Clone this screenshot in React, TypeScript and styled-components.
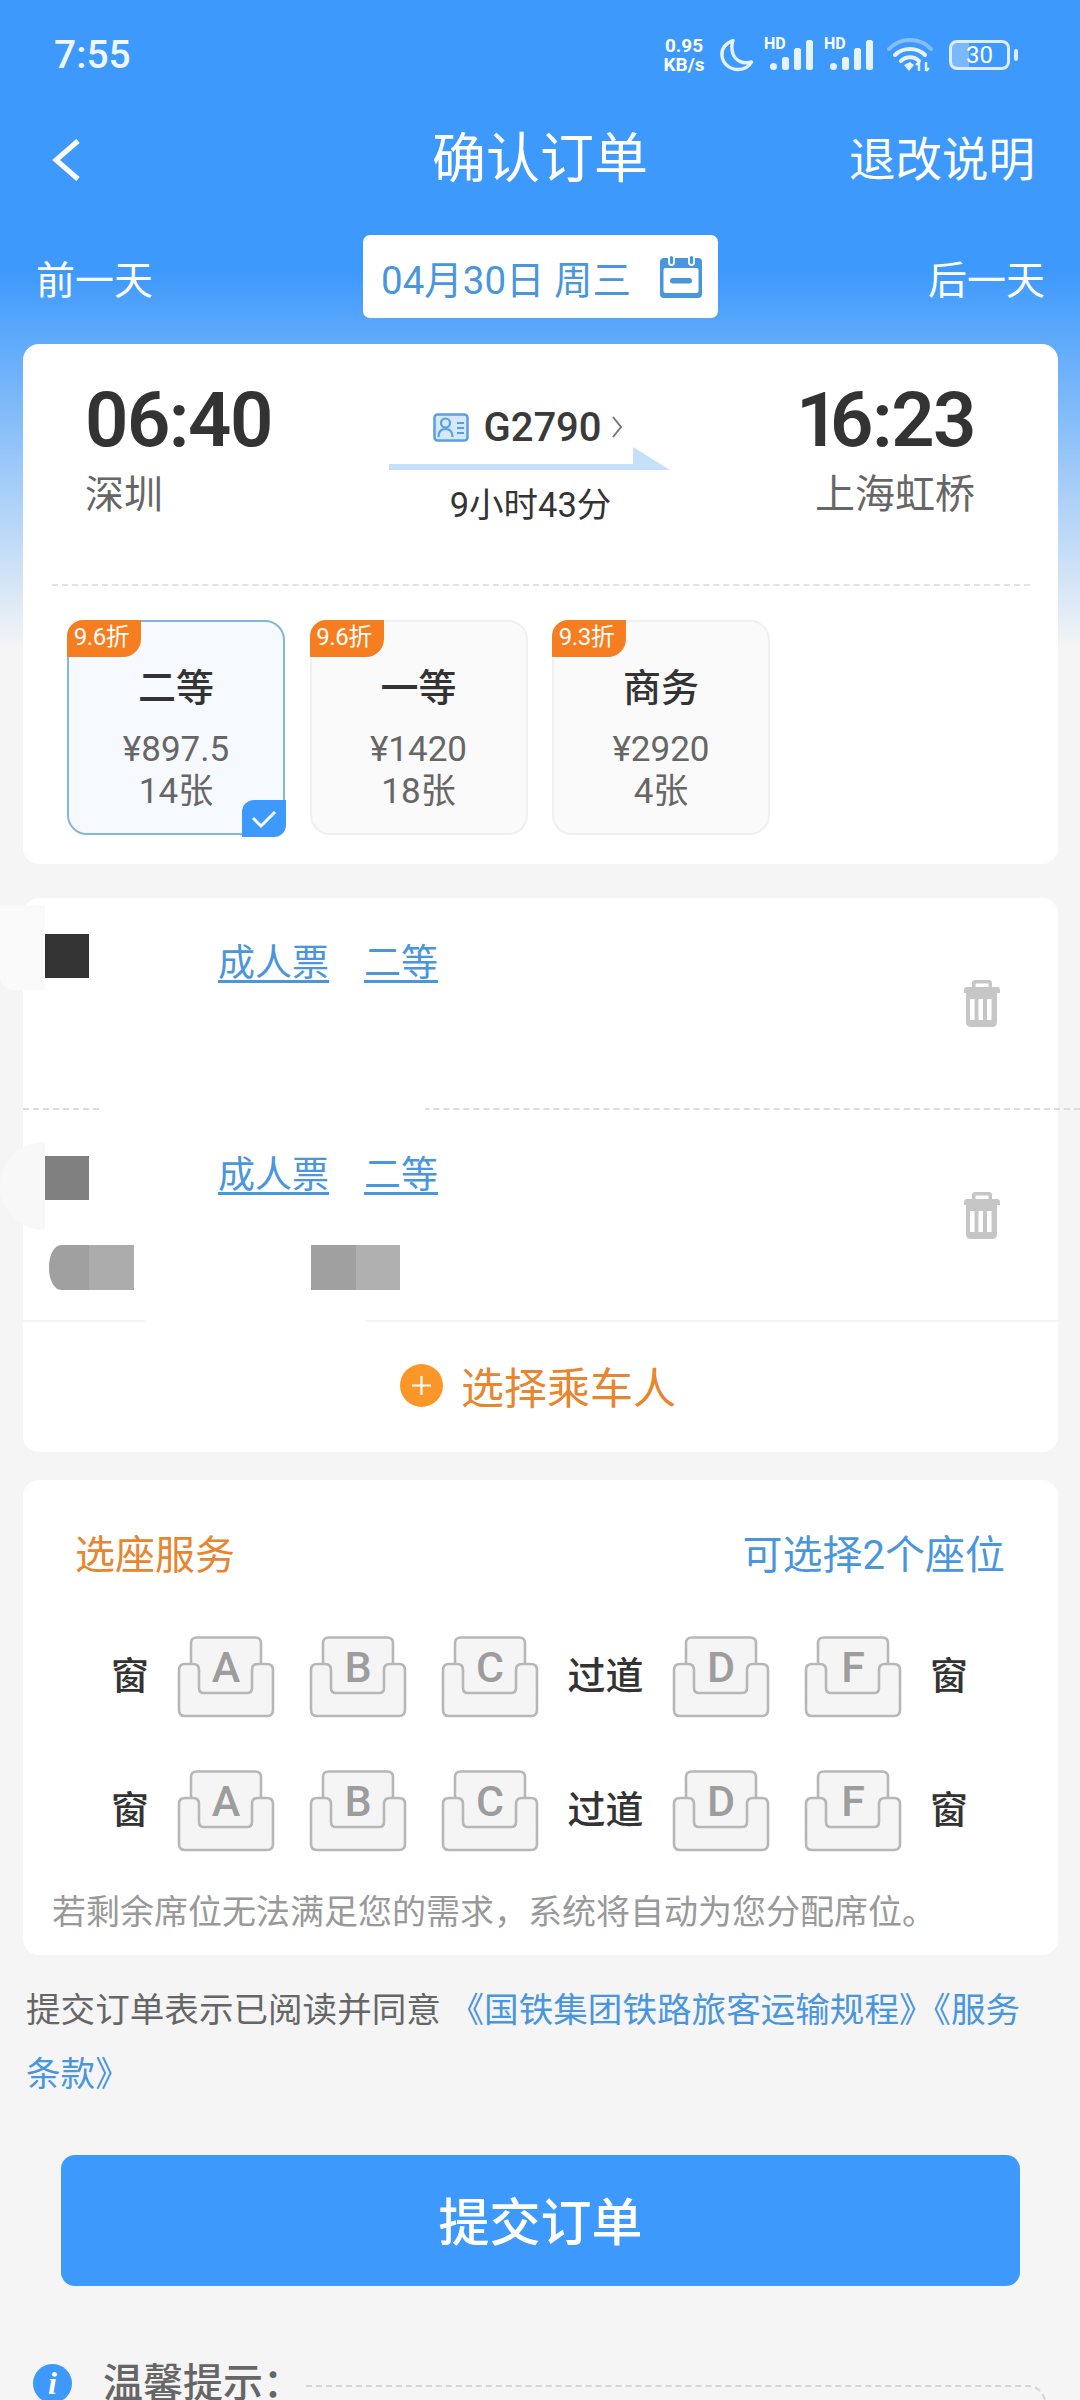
import styled, { createGlobalStyle } from "styled-components";

const GlobalStyle = createGlobalStyle`
  html, body {
    margin: 0;
    padding: 0;
    background: #f5f5f5;
  }
  * {
    box-sizing: border-box;
  }
`;

const BLUE = "#3d99fc";
const LINK = "#4a96dd";
const ORANGE = "#e8852f";

const Page = styled.div`
  width: 1080px;
  height: 2400px;
  overflow: hidden;
  font-family: Roboto, "Noto Sans CJK SC", sans-serif;
  background: linear-gradient(#3d99fc 0, #3d99fc 270px, #f5f5f5 650px);
`;

const StatusBar = styled.div`
  height: 110px;
  padding: 0 70px 0 54px;
  display: flex;
  align-items: center;
  justify-content: space-between;
  color: #fff;
`;

const Clock = styled.span`
  font-size: 39px;
  font-weight: 500;
  color: #eef6ff;
`;

const StatusIcons = styled.div`
  display: flex;
  align-items: center;
`;

const NetSpeed = styled.div`
  width: 48px;
  font-size: 19px;
  line-height: 19px;
  font-weight: 700;
  text-align: center;
  white-space: nowrap;
  margin-right: 11px;
`;

const SignalBox = styled.div`
  position: relative;
  width: 50px;
  height: 32px;
  margin-left: 10px;
`;

const HdLabel = styled.span`
  position: absolute;
  left: 0;
  top: -2px;
  font-size: 16px;
  line-height: 14px;
  font-weight: 700;
`;

const Battery = styled.div`
  position: relative;
  width: 61px;
  height: 30px;
  margin-left: 16px;
  border: 3px solid #dcedff;
  border-radius: 8px;
  display: flex;
  align-items: center;
  justify-content: center;
  font-size: 24px;
  line-height: 24px;
  background: linear-gradient(90deg, #7ab7fd 0, #7ab7fd 30%, transparent 30%);
  &::after {
    content: "";
    position: absolute;
    right: -11px;
    top: 6px;
    width: 4px;
    height: 12px;
    border-radius: 2px;
    background: #dcedff;
  }
`;

const NavBar = styled.div`
  height: 100px;
  padding: 0 45px 0 50px;
  display: flex;
  align-items: center;
  justify-content: space-between;
  position: relative;
  color: #fff;
`;

const NavTitle = styled.div`
  position: absolute;
  left: 0;
  right: 0;
  text-align: center;
  font-size: 54px;
  line-height: 70px;
  pointer-events: none;
`;

const NavAction = styled.span`
  font-size: 46.5px;
  line-height: 60px;
`;

const DateRow = styled.div`
  margin-top: 25px;
  height: 83px;
  padding: 0 35px 0 36px;
  display: flex;
  align-items: center;
  justify-content: space-between;
`;

const DayLink = styled.span`
  font-size: 39px;
  color: #fff;
`;

const DatePicker = styled.div`
  width: 355px;
  height: 83px;
  padding: 0 16px 0 18px;
  border-radius: 7px;
  background: #fff;
  display: flex;
  align-items: center;
  justify-content: space-between;
  color: ${LINK};
  font-size: 38.5px;
`;

const Card = styled.div`
  position: relative;
  margin: 0 22px 0 23px;
  background: #fff;
  border-radius: 16px;
`;

const TrainCard = styled(Card)`
  margin-top: 26px;
  height: 520px;
`;

const Journey = styled.div`
  height: 240px;
  padding: 34px 0 0 62px;
  display: grid;
  grid-template-columns: 304px 283px 1fr;
`;

const Stop = styled.div<{ $right?: boolean }>`
  text-align: ${(p) => (p.$right ? "right" : "left")};
  padding-right: ${(p) => (p.$right ? "83px" : "0")};
`;

const StopTime = styled.div`
  font-size: 76px;
  line-height: 84px;
  font-weight: 600;
  letter-spacing: -1.5px;
  color: #333;
`;

const NarrowOne = styled.span`
  letter-spacing: -9.5px;
`;

const StopName = styled.div<{ $large?: boolean }>`
  margin-top: 8px;
  font-size: ${(p) => (p.$large ? "40px" : "39px")};
  line-height: 50px;
  color: #666;
`;

const TrainInfo = styled.div`
  display: flex;
  flex-direction: column;
  align-items: center;
`;

const TrainNumber = styled.div`
  margin-top: 31px;
  height: 36px;
  padding-right: 5px;
  display: flex;
  align-items: center;
  gap: 15px;
  font-size: 40px;
  font-weight: 500;
  color: #3a3a3a;
`;

const Duration = styled.div`
  margin-top: 13px;
  font-size: 34.5px;
  line-height: 44px;
  color: #333;
`;

const DashedLine = styled.div`
  margin: 0 28px 0 29px;
  border-top: 2px dashed #e2e2e2;
`;

const ClassList = styled.div`
  margin-top: 34px;
  padding-left: 44px;
  display: flex;
  gap: 24.5px;
`;

const ClassCard = styled.div<{ $active?: boolean }>`
  position: relative;
  width: 218px;
  height: 215px;
  border-radius: 20px;
  padding-top: 41px;
  text-align: center;
  border: 2px solid ${(p) => (p.$active ? "#85b6d6" : "#f0f0f0")};
  background: ${(p) => (p.$active ? "#f6fafe" : "#fafafa")};
`;

const Discount = styled.span`
  position: absolute;
  left: -2px;
  top: -2px;
  width: 74px;
  height: 37px;
  padding-right: 5px;
  border-radius: 16px 0 18px 0;
  background: #f77e20;
  color: #fff;
  font-size: 24px;
  line-height: 35px;
  letter-spacing: -0.5px;
`;

const ClassName = styled.div`
  margin-bottom: 16px;
  font-size: 38px;
  line-height: 50px;
  font-weight: 500;
  color: #333;
`;

const ClassMeta = styled.div`
  font-size: 35px;
  line-height: 42px;
  color: #666;
`;

const CheckMark = styled.span`
  position: absolute;
  right: -3px;
  bottom: -4px;
  width: 44px;
  height: 37px;
  border-radius: 12px 0 12px 0;
  background: ${BLUE};
  display: flex;
  align-items: center;
  justify-content: center;
`;

const PassengerCard = styled(Card)`
  margin-top: 34px;
  height: 554px;
`;

const PassengerRow = styled.div<{ $solid?: boolean }>`
  height: 212px;
  margin-right: ${(p) => (p.$solid ? "0" : "-22px")};
  padding: 44px ${(p) => (p.$solid ? "58px" : "80px")} 0 195px;
  display: flex;
  justify-content: space-between;
  border-bottom: 2px ${(p) => (p.$solid ? "solid #f5f5f5" : "dashed #dcdcdc")};
`;

const Tickets = styled.div`
  display: flex;
  gap: 35px;
  height: 44px;
`;

const TicketLink = styled.span`
  font-size: 37px;
  line-height: 44px;
  color: ${LINK};
  text-decoration: underline;
  text-underline-offset: 4px;
`;

const TrashButton = styled.div`
  margin-top: 38px;
`;

const Redaction = styled.div<{
  $x: number;
  $y: number;
  $w: number;
  $h: number;
  $color: string;
  $round?: string;
}>`
  position: absolute;
  left: ${(p) => p.$x}px;
  top: ${(p) => p.$y}px;
  width: ${(p) => p.$w}px;
  height: ${(p) => p.$h}px;
  background: ${(p) => p.$color};
  border-radius: ${(p) => p.$round || "0"};
`;

const AddPassenger = styled.div`
  height: 126px;
  display: flex;
  align-items: center;
  justify-content: center;
  gap: 18px;
  padding-right: 5px;
  font-size: 43px;
  color: ${ORANGE};
`;

const PlusCircle = styled.span`
  width: 43px;
  height: 43px;
  border-radius: 50%;
  background: #fb9629;
  display: flex;
  align-items: center;
  justify-content: center;
`;

const SeatCard = styled(Card)`
  margin-top: 28px;
  height: 475px;
  padding-top: 47px;
`;

const SeatHeader = styled.div`
  height: 50px;
  padding: 0 53px 0 52px;
  display: flex;
  align-items: center;
  justify-content: space-between;
`;

const SeatTitle = styled.span`
  font-size: 40px;
  color: ${ORANGE};
`;

const SeatHint = styled.span`
  font-size: 40px;
  color: ${LINK};
`;

const SeatRow = styled.div<{ $first?: boolean }>`
  margin-top: ${(p) => (p.$first ? "59px" : "52px")};
  padding: 0 90px 0 88px;
  display: flex;
  align-items: center;
  justify-content: space-between;
`;

const SeatGroup = styled.div`
  display: flex;
  gap: 34px;
`;

const SeatSide = styled.span<{ $wide?: boolean }>`
  font-size: 38px;
  line-height: 44px;
  margin-bottom: 2px;
  color: #333;
  font-weight: 500;
  width: ${(p) => (p.$wide ? "78px" : "38px")};
  text-align: center;
  white-space: nowrap;
`;

const SeatLetter = styled.text`
  font-family: Roboto, sans-serif;
  font-size: 43px;
  font-weight: 500;
  fill: #9d9d9d;
  text-anchor: middle;
`;

const SeatNote = styled.div`
  margin-top: 40px;
  padding-left: 29px;
  font-size: 34px;
  line-height: 40px;
  color: #999;
  white-space: nowrap;
`;

const Agreement = styled.div`
  margin-top: 23px;
  padding: 0 30px 0 26px;
  font-size: 34.6px;
  line-height: 64px;
  color: #666;
`;

const AgreementLink = styled.span`
  color: ${LINK};
`;

const SubmitButton = styled.div`
  margin: 49px 60px 0 61px;
  height: 131px;
  padding-bottom: 4px;
  border-radius: 14px;
  background: ${BLUE};
  color: #fff;
  font-size: 51px;
  font-weight: 500;
  display: flex;
  align-items: center;
  justify-content: center;
`;

const TipRow = styled.div`
  margin-top: 72px;
  padding: 0 34px 0 33px;
  display: flex;
  align-items: flex-start;
`;

const TipIcon = styled.span`
  width: 39px;
  height: 39px;
  margin-top: 6px;
  border-radius: 50%;
  background: ${BLUE};
  color: #fff;
  font-family: "Liberation Serif", serif;
  font-style: italic;
  font-weight: 700;
  font-size: 32px;
  line-height: 39px;
  text-align: center;
`;

const TipTitle = styled.span`
  margin-left: 31px;
  font-size: 40px;
  line-height: 52px;
  font-weight: 500;
  color: #666;
  white-space: nowrap;
`;

const TipBox = styled.div`
  flex: 1;
  height: 90px;
  margin: 27px 0 0 3px;
  border-top: 2px dashed #d5d5d5;
  border-right: 2px dashed #d5d5d5;
  border-top-right-radius: 18px;
`;

const Moon = () => (
  <svg width="35" height="34" viewBox="0 0 35 34" fill="none">
    <path
      d="M14 2.5C6.5 5 2 11 3 18c1 8 8 13.5 16 13.5 6 0 11-3 13.5-7.5-9 2.5-16-1.5-18.5-8C12.500 11 12.500 6.500 14 2.500Z"
      stroke="#e6f2ff"
      strokeWidth="3.4"
      strokeLinejoin="round"
    />
  </svg>
);

const Signal = () => (
  <SignalBox>
    <HdLabel>HD</HdLabel>
    <svg width="50" height="32" viewBox="0 0 50 32" fill="#e6f2ff">
      <rect x="6" y="24" width="7" height="7" rx="3.500" />
      <rect x="18" y="18" width="7" height="13" rx="2.500" />
      <rect x="30" y="9" width="7" height="22" rx="2.500" />
      <rect x="42" y="1" width="7" height="30" rx="2.500" />
    </svg>
  </SignalBox>
);

const Wifi = () => (
  <svg width="46" height="34" viewBox="0 0 46 34" fill="none" style={{ marginLeft: 13 }}>
    <path d="M2 11C13 -1 33 -1 44 11" stroke="#86bdfd" strokeWidth="4" strokeLinecap="round" />
    <path d="M8 17C16 9 30 9 38 17" stroke="#e6f2ff" strokeWidth="4" strokeLinecap="round" />
    <path d="M14 23C19 18 27 18 32 23" stroke="#e6f2ff" strokeWidth="4" strokeLinecap="round" />
    <path d="M17 27L23 24L27 27L22 33Z" fill="#e6f2ff" />
    <path d="M32 33V24M29 27L32 24M39 24V33M39 33L42 30" stroke="#e6f2ff" strokeWidth="2.400" />
  </svg>
);

const CalendarIcon = () => (
  <svg width="42" height="44" viewBox="0 0 42 44" fill="none">
    <rect x="0" y="3" width="42" height="40" rx="4" fill={LINK} />
    <rect x="3.500" y="13" width="35" height="25" rx="2" fill="#fff" />
    <rect x="9" y="0" width="5" height="10" rx="2.500" fill={LINK} stroke="#fff" strokeWidth="1.800" />
    <rect x="29" y="0" width="5" height="10" rx="2.500" fill={LINK} stroke="#fff" strokeWidth="1.800" />
    <rect x="10" y="23" width="22" height="5.500" rx="2.700" fill={LINK} />
  </svg>
);

const IdIcon = () => (
  <svg width="36" height="29" viewBox="0 0 36 29" fill="none" style={{ marginRight: -1 }}>
    <rect x="1.500" y="1.500" width="33" height="26" rx="3" fill="#d6e8fc" stroke="#5a9fe0" strokeWidth="2.500" />
    <circle cx="12.500" cy="10" r="4.500" stroke="#5a9fe0" strokeWidth="2.200" />
    <path d="M5.500 24C5.500 18 8.500 16 12.500 16C16.500 16 19.500 18 19.500 24" stroke="#5a9fe0" strokeWidth="2.200" />
    <path d="M24 10H31M24 15H31M24 20H31" stroke="#5a9fe0" strokeWidth="2.200" />
  </svg>
);

const TrashIcon = () => (
  <svg width="36" height="47" viewBox="0 0 36 47" fill="#c6c6c6">
    <path d="M8 8V3Q8 0 11 0H25Q28 0 28 3V8H24.500V3.500H11.500V8Z" />
    <path d="M3 7H33Q36 7 36 10V13H0V10Q0 7 3 7Z" />
    <path d="M2 13H33V42Q33 47 28 47H7Q2 47 2 42Z" />
    <rect x="6" y="19" width="4.500" height="21" fill="#fff" />
    <rect x="14.500" y="19" width="4.500" height="21" fill="#fff" />
    <rect x="23" y="19" width="4.500" height="21" fill="#fff" />
  </svg>
);

const SeatIcon = ({ letter }: { letter: string }) => (
  <svg width="98" height="82" viewBox="0 0 98 82">
    <path d="M14 30V7Q14 1.500 20 1.500H78Q84 1.500 84 7V30L75 58H22Z" fill="#f5f5f5" />
    <path d="M14 28V7Q14 1.500 20 1.500H78Q84 1.500 84 7V28" fill="none" stroke="#b7b7b7" strokeWidth="2.600" />
    <path
      d="M2 34Q2 28 8 28H16Q22 28 22 34V52Q22 57 27 57H70Q75 57 75 52V34Q75 28 81 28H90Q96 28 96 34V74Q96 80 90 80H8Q2 80 2 74Z"
      fill="#f5f5f5"
      stroke="#b7b7b7"
      strokeWidth="2.600"
    />
    <SeatLetter x="49" y="46">
      {letter}
    </SeatLetter>
  </svg>
);

const SeatLine = ({ first }: { first?: boolean }) => (
  <SeatRow $first={first}>
    <SeatSide>窗</SeatSide>
    <SeatGroup>
      {["A", "B", "C"].map((s) => (
        <SeatIcon key={s} letter={s} />
      ))}
    </SeatGroup>
    <SeatSide $wide>过道</SeatSide>
    <SeatGroup>
      {["D", "F"].map((s) => (
        <SeatIcon key={s} letter={s} />
      ))}
    </SeatGroup>
    <SeatSide>窗</SeatSide>
  </SeatRow>
);

const classes = [
  { name: "二等", price: "¥897.5", left: "14张", off: "9.6折", active: true },
  { name: "一等", price: "¥1420", left: "18张", off: "9.6折" },
  { name: "商务", price: "¥2920", left: "4张", off: "9.3折" },
];

// the privacy blocks painted over the passenger names in the screenshot
const redactions = [
  { x: -23, y: 7, w: 45, h: 85, color: "#fafafa", round: "0 0 0 14px" },
  { x: 22, y: 36, w: 44, h: 44, color: "#333" },
  { x: -23, y: 244, w: 45, h: 88, color: "#f8f8f8", round: "44px 0 0 44px" },
  { x: 22, y: 258, w: 44, h: 44, color: "#808080" },
  { x: 26, y: 347, w: 40, h: 45, color: "#a0a0a0", round: "12px 0 0 12px / 22px 0 0 22px" },
  { x: 66, y: 347, w: 45, h: 45, color: "#acacac" },
  { x: 288, y: 347, w: 45, h: 45, color: "#a0a0a0" },
  { x: 333, y: 347, w: 44, h: 45, color: "#b0b0b0" },
  { x: 77, y: 209, w: 325, h: 5, color: "#fff" },
  { x: 122, y: 421, w: 220, h: 4, color: "#fff" },
];

const App = () => {
  return (
    <Page>
      <GlobalStyle />
      <StatusBar>
        <Clock>7:55</Clock>
        <StatusIcons>
          <NetSpeed>
            0.95
            <br />
            KB/s
          </NetSpeed>
          <Moon />
          <Signal />
          <Signal />
          <Wifi />
          <Battery>30</Battery>
        </StatusIcons>
      </StatusBar>
      <NavBar>
        <svg width="34" height="44" viewBox="0 0 34 44" fill="none">
          <path d="M28 3L6 22L28 41" stroke="#fff" strokeWidth="5" />
        </svg>
        <NavTitle>确认订单</NavTitle>
        <NavAction>退改说明</NavAction>
      </NavBar>
      <DateRow>
        <DayLink>前一天</DayLink>
        <DatePicker>
          <span>04月30日 周三</span>
          <CalendarIcon />
        </DatePicker>
        <DayLink>后一天</DayLink>
      </DateRow>

      <TrainCard>
        <Journey>
          <Stop>
            <StopTime>06:40</StopTime>
            <StopName>深圳</StopName>
          </Stop>
          <TrainInfo>
            <TrainNumber>
              <IdIcon />
              <span>G2790</span>
              <svg width="12" height="24" viewBox="0 0 12 24" fill="none" style={{ marginLeft: -6 }}>
                <path d="M2 2L10 12L2 22" stroke="#777" strokeWidth="2" />
              </svg>
            </TrainNumber>
            <svg width="283" height="23" viewBox="0 0 283 23" style={{ marginTop: 2 }}>
              <polygon points="0,17 244,17 244,0 281,23 0,23" fill="#c6e0fc" />
            </svg>
            <Duration>9小时43分</Duration>
          </TrainInfo>
          <Stop $right>
            <StopTime>
              <NarrowOne>1</NarrowOne>6:23
            </StopTime>
            <StopName $large>上海虹桥</StopName>
          </Stop>
        </Journey>
        <DashedLine />
        <ClassList>
          {classes.map((c) => (
            <ClassCard key={c.name} $active={c.active}>
              <Discount>{c.off}</Discount>
              <ClassName>{c.name}</ClassName>
              <ClassMeta>{c.price}</ClassMeta>
              <ClassMeta>{c.left}</ClassMeta>
              {c.active && (
                <CheckMark>
                  <svg width="26" height="20" viewBox="0 0 26 20" fill="none">
                    <path d="M2 9L10 17L24 3" stroke="#fff" strokeWidth="3" />
                  </svg>
                </CheckMark>
              )}
            </ClassCard>
          ))}
        </ClassList>
      </TrainCard>

      <PassengerCard>
        <PassengerRow>
          <Tickets>
            <TicketLink>成人票</TicketLink>
            <TicketLink>二等</TicketLink>
          </Tickets>
          <TrashButton>
            <TrashIcon />
          </TrashButton>
        </PassengerRow>
        <PassengerRow $solid>
          <Tickets>
            <TicketLink>成人票</TicketLink>
            <TicketLink>二等</TicketLink>
          </Tickets>
          <TrashButton>
            <TrashIcon />
          </TrashButton>
        </PassengerRow>
        <AddPassenger>
          <PlusCircle>
            <svg width="19" height="19" viewBox="0 0 19 19" fill="none">
              <path d="M9.500 0V19M0 9.500H19" stroke="#fff" strokeWidth="2.200" />
            </svg>
          </PlusCircle>
          选择乘车人
        </AddPassenger>
        {redactions.map((r) => (
          <Redaction
            key={`${r.x}-${r.y}`}
            $x={r.x}
            $y={r.y}
            $w={r.w}
            $h={r.h}
            $color={r.color}
            $round={r.round}
          />
        ))}
      </PassengerCard>

      <SeatCard>
        <SeatHeader>
          <SeatTitle>选座服务</SeatTitle>
          <SeatHint>可选择2个座位</SeatHint>
        </SeatHeader>
        <SeatLine first />
        <SeatLine />
        <SeatNote>若剩余席位无法满足您的需求，系统将自动为您分配席位。</SeatNote>
      </SeatCard>

      <Agreement>
        提交订单表示已阅读并同意{" "}
        <AgreementLink>《国铁集团铁路旅客运输规程》《服务</AgreementLink>
        <br />
        <AgreementLink>条款》</AgreementLink>
      </Agreement>
      <SubmitButton>提交订单</SubmitButton>
      <TipRow>
        <TipIcon>i</TipIcon>
        <TipTitle>温馨提示：</TipTitle>
        <TipBox />
      </TipRow>
    </Page>
  );
};

export default App;
